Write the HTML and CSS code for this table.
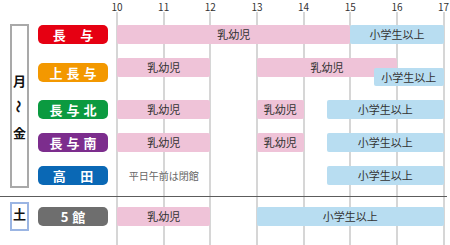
FILE: index.html
```html
<!DOCTYPE html>
<html lang="ja">
<head>
  <meta charset="UTF-8">
  <title>開館時間</title>
  <link rel="stylesheet" href="styles.css">
</head>
<body>

  <!-- vertical hour lines -->
  <div class="grid">
    <span></span><span></span><span></span><span></span>
    <span></span><span></span><span></span><span></span>
  </div>

  <div class="hours">
    <span>10</span><span>11</span><span>12</span><span>13</span>
    <span>14</span><span>15</span><span>16</span><span>17</span>
  </div>

  <!-- 月〜金 -->
  <div class="week">
    <div class="day day-week">
      <span>月</span><span class="wave">〜</span><span>金</span>
    </div>
    <div class="rows">
      <div class="row">
        <div class="label red">長&ensp;与</div>
        <div class="track">
          <div class="bar infant" style="--s:0;--e:5">乳幼児</div>
          <div class="bar child" style="--s:5;--e:7">小学生以上</div>
        </div>
      </div>
      <div class="row">
        <div class="label orange">上長与</div>
        <div class="track tall">
          <div class="bar infant" style="--s:0;--e:2">乳幼児</div>
          <div class="bar infant" style="--s:3;--e:6">乳幼児</div>
          <div class="bar child low" style="--s:5.5;--e:7">小学生以上</div>
        </div>
      </div>
      <div class="row">
        <div class="label green">長与北</div>
        <div class="track">
          <div class="bar infant" style="--s:0;--e:2">乳幼児</div>
          <div class="bar infant" style="--s:3;--e:4">乳幼児</div>
          <div class="bar child" style="--s:4.5;--e:7">小学生以上</div>
        </div>
      </div>
      <div class="row">
        <div class="label purple">長与南</div>
        <div class="track">
          <div class="bar infant" style="--s:0;--e:2">乳幼児</div>
          <div class="bar infant" style="--s:3;--e:4">乳幼児</div>
          <div class="bar child" style="--s:4.5;--e:7">小学生以上</div>
        </div>
      </div>
      <div class="row">
        <div class="label blue">高&ensp;田</div>
        <div class="track">
          <div class="bar note" style="--s:0;--e:2">平日午前は閉館</div>
          <div class="bar child" style="--s:4.5;--e:7">小学生以上</div>
        </div>
      </div>
    </div>
  </div>

  <!-- 土 -->
  <div class="sat">
    <div class="day day-sat"><span>土</span></div>
    <div class="rows">
      <div class="row">
        <div class="label gray">5館</div>
        <div class="track">
          <div class="bar infant" style="--s:0;--e:2">乳幼児</div>
          <div class="bar child" style="--s:3;--e:7">小学生以上</div>
        </div>
      </div>
    </div>
  </div>

</body>
</html>
```

FILE: styles.css
```css
:root {
  --hour: 46.667px;
  --infant: #efc3d8;
  --child: #b8ddf1;
  --line: #d6d6d6;
}

html, body {
  width: 450px;
  height: 245px;
  margin: 0;
  padding: 0;
  overflow: hidden;
  background: #fff;
  color: #222;
  font-family: "Noto Sans CJK JP", "Noto Sans", sans-serif;
}

body {
  position: relative;
}

.grid {
  position: absolute;
  top: 12px;
  bottom: 0;
  left: 116px;
  width: calc(var(--hour) * 7 + 2px);
  display: flex;
  justify-content: space-between;
}

.grid span {
  width: 2px;
  background: var(--line);
}

.hours {
  display: flex;
  justify-content: space-between;
  margin-left: 107px;
  width: calc(var(--hour) * 7 + 20px);
  height: 13px;
  font-size: 10px;
  line-height: 13px;
  color: #333;
}

.hours span {
  width: 20px;
  text-align: center;
}

.week {
  display: flex;
  height: 183px;
}

.sat {
  position: relative;
  display: flex;
  width: 447px;
  height: 48px;
  border-top: 1px solid #5c5c5c;
}

.day {
  box-sizing: border-box;
  width: 19px;
  margin-left: 10px;
  display: flex;
  flex-direction: column;
  align-items: center;
  justify-content: center;
  font-size: 13px;
  font-weight: 700;
  line-height: 13px;
  color: #111;
}

.day-week {
  height: 164px;
  margin-top: 11px;
  gap: 13px;
  border: 2px solid #a9a9a9;
}

.day-week .wave {
  transform: rotate(90deg);
}

.day-sat {
  height: 29px;
  margin-top: 5px;
  padding-bottom: 6px;
  border: 2px solid #9bb5e3;
}

.rows {
  display: flex;
  flex-direction: column;
  gap: 14px;
  margin-left: 9px;
  margin-top: 12px;
  flex: 1;
}

.sat .rows {
  margin-top: 10px;
}

.row {
  display: flex;
  align-items: center;
  gap: 9px;
}

.label {
  width: 70px;
  height: 19px;
  box-sizing: border-box;
  padding-left: 4px;
  border-radius: 5px;
  color: #fff;
  font-size: 13px;
  font-weight: 700;
  line-height: 19px;
  letter-spacing: 4px;
  text-align: center;
}

.red { background: #e60012; }
.orange { background: #f39800; }
.green { background: #0b9a40; }
.purple { background: #7c2d8d; }
.blue { background: #0a68b5; }
.gray { background: #6e6e6e; }

.track {
  position: relative;
  flex: 1;
  height: 19px;
}

.track.tall {
  height: 28px;
}

.bar {
  position: absolute;
  top: 0;
  left: calc(var(--s) * var(--hour));
  width: calc((var(--e) - var(--s)) * var(--hour));
  height: 19px;
  border-radius: 2px;
  font-size: 11px;
  line-height: 19px;
  text-align: center;
  color: #333;
  white-space: nowrap;
}

.bar.low {
  top: 10px;
  height: 18px;
  line-height: 18px;
}

.infant { background: var(--infant); }
.child { background: var(--child); }

.note {
  font-size: 10px;
  color: #666;
}
```
